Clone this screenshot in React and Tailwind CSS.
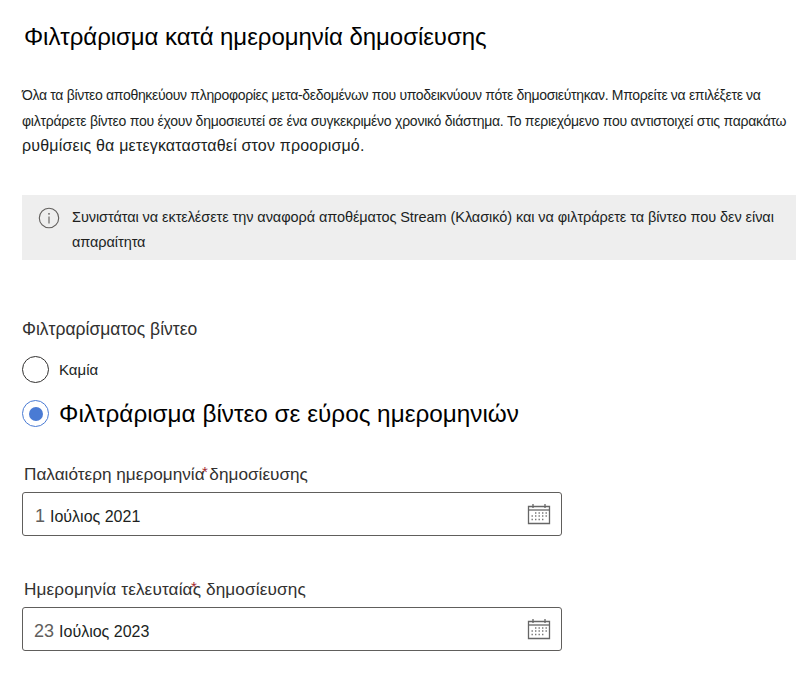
const font = "font-['Liberation_Sans',Arial,sans-serif]";

const CalendarIcon = () => (
  <svg width="24" height="22" viewBox="0 0 24 22" fill="none" className="shrink-0">
    <path d="M1.5 3.5h21v17h-21z" stroke="#666" strokeWidth="1.3" />
    <path d="M1.5 7h21" stroke="#666" strokeWidth="1.3" />
    <path d="M6 1v4M18 1v4" stroke="#666" strokeWidth="1.3" />
    <path
      d="M8 10h1.4M11.5 10h1.4M15 10h1.4M18.5 10h1.4M4.5 13h1.4M8 13h1.4M11.5 13h1.4M15 13h1.4M18.5 13h1.4M4.5 16.5h1.4M8 16.5h1.4M11.5 16.5h1.4M15 16.5h1.4"
      stroke="#777"
      strokeWidth="1.4"
    />
  </svg>
);

const DateField = ({ label, star, day, rest, pad, track }) => (
  <div>
    <label className={`relative block pl-[2px] text-[17.2px] leading-[20px] text-[#323130] ${track}`}>
      {label}
      <span className={`absolute top-[-2px] text-[15px] text-[#a4262c] ${star}`}>*</span>
    </label>
    <div className="mt-[8px] flex h-[44px] w-[540px] items-center justify-between rounded-[3px] border border-[#605e5c] pr-[10px]">
      <span className={`flex items-center gap-[5px] pt-[5px] text-[16px] tracking-normal text-[#201f1e] ${pad}`}>
        <span className="text-[18px] text-[#605e5c]">{day}</span>
        {rest}
      </span>
      <CalendarIcon />
    </div>
  </div>
);

export default function App() {
  return (
    <div className={`${font} min-h-[700px] w-[812px] bg-white text-black`}>
      <div className="pl-[22px] pr-[16px] pt-[21px]">
        <h1 className="pl-[2px] text-[24px] font-normal leading-[32px] tracking-[-0.05px]">
          Φιλτράρισμα κατά ημερομηνία δημοσίευσης
        </h1>

        <div className="mt-[29px] text-[14px] text-[#201f1e]">
          <p className="whitespace-nowrap leading-[26px] tracking-[-0.32px]">
            Όλα τα βίντεο αποθηκεύουν πληροφορίες μετα-δεδομένων που υποδεικνύουν πότε δημοσιεύτηκαν. Μπορείτε να επιλέξετε να
          </p>
          <p className="whitespace-nowrap leading-[26px] tracking-[-0.25px]">
            φιλτράρετε βίντεο που έχουν δημοσιευτεί σε ένα συγκεκριμένο χρονικό διάστημα. Το περιεχόμενο που αντιστοιχεί στις παρακάτω
          </p>
          <p className="whitespace-nowrap text-[16px] leading-[24px] tracking-[0.18px]">
            ρυθμίσεις θα μετεγκατασταθεί στον προορισμό.
          </p>
        </div>

        <div className="mt-[37px] flex h-[65px] w-[774px] items-start gap-[12px] bg-[#eeeeee] pl-[16px] pt-[10px]">
          <svg width="22" height="22" viewBox="0 0 22 22" fill="none" className="mt-[2px] shrink-0">
            <circle cx="11" cy="11" r="9.7" stroke="#605e5c" strokeWidth="1.1" />
            <circle cx="11" cy="6.8" r="0.9" fill="#605e5c" />
            <path d="M11 9.5v7" stroke="#605e5c" strokeWidth="1.1" />
          </svg>
          <p className="text-[14.5px] leading-[25px] tracking-[-0.07px] text-[#201f1e]">
            Συνιστάται να εκτελέσετε την αναφορά αποθέματος Stream (Κλασικό) και να φιλτράρετε τα βίντεο που δεν είναι
            <br />
            απαραίτητα
          </p>
        </div>

        <p className="mt-[59px] text-[17.5px] leading-[20px] text-[#323130]">Φιλτραρίσματος βίντεο</p>

        <div className="mt-[17px] flex items-center gap-[10px]">
          <span className="h-[27px] w-[27px] rounded-full border border-[#323130]" />
          <span className="pt-[1px] text-[15px] text-[#201f1e]">Καμία</span>
        </div>

        <div className="mt-[17px] flex items-center gap-[10px]">
          <span className="flex h-[27px] w-[27px] items-center justify-center rounded-full border border-[#4a7bd4]">
            <span className="h-[14px] w-[14px] rounded-full bg-[#4a7bd4]" />
          </span>
          <span className="text-[24.3px] leading-[27px] text-black">Φιλτράρισμα βίντεο σε εύρος ημερομηνιών</span>
        </div>

        <div className="mt-[37px]">
          <DateField
            label="Παλαιότερη ημερομηνία δημοσίευσης"
            star="left-[180px]"
            day="1"
            rest="Ιούλιος 2021"
            pad="pl-[12px]"
            track="tracking-normal"
          />
        </div>
        <div className="mt-[43px]">
          <DateField
            label="Ημερομηνία τελευταίας δημοσίευσης"
            star="left-[169px]"
            day="23"
            rest="Ιούλιος 2023"
            pad="pl-[11px]"
            track="tracking-[0.12px]"
          />
        </div>
      </div>
    </div>
  );
}
